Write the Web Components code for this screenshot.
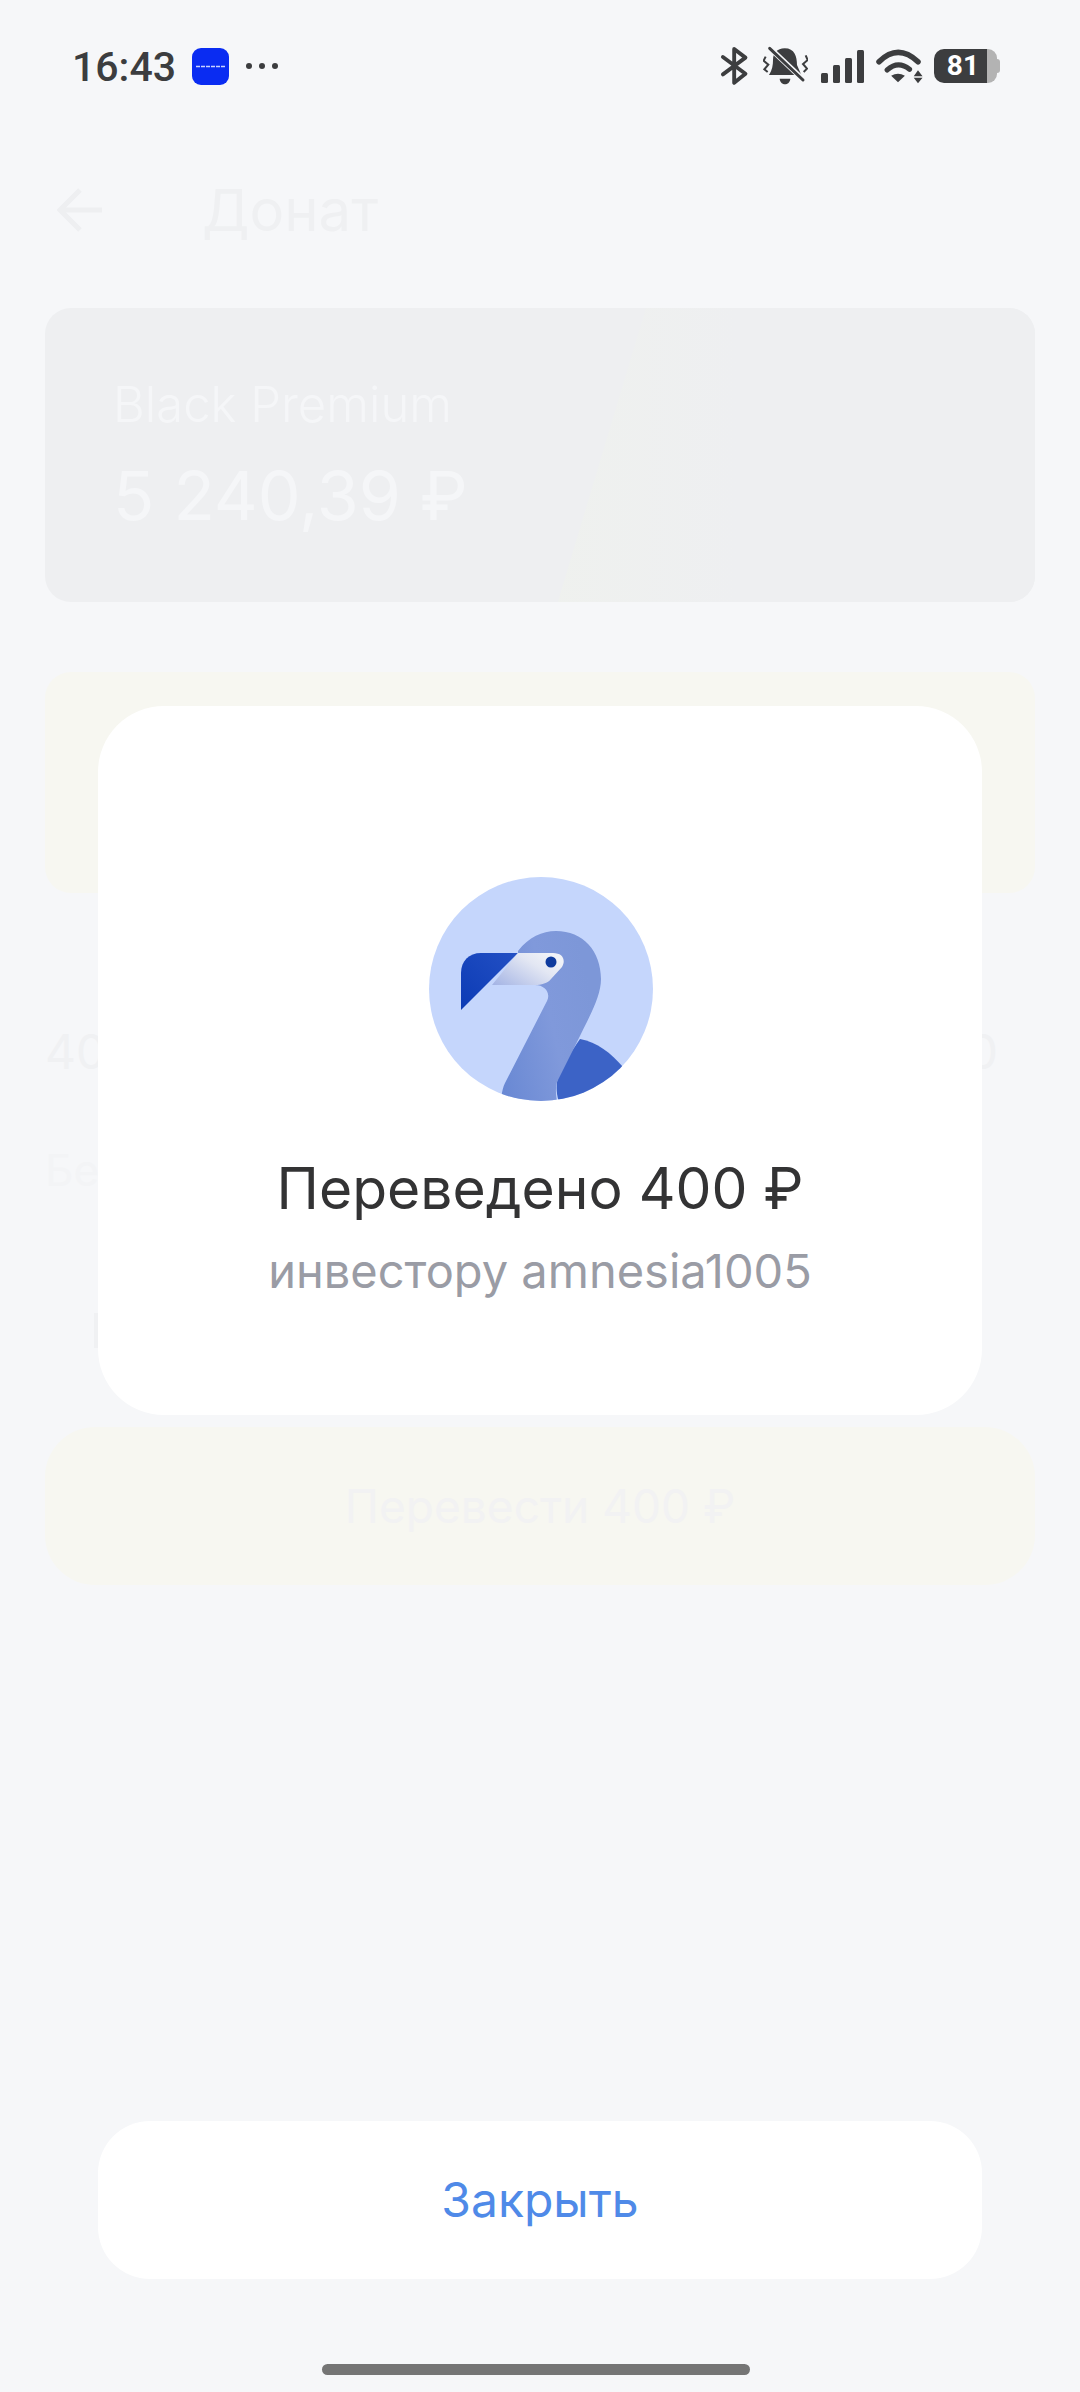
<!DOCTYPE html>
<html lang="ru">
<head>
<meta charset="utf-8">
<title>Донат</title>
<style>
  html, body { margin: 0; padding: 0; }
  body { width: 1080px; height: 2392px; overflow: hidden; background: #f6f7f9; font-family: Inter, "Noto Sans", sans-serif; }
</style>
</head>
<body>
<donate-screen>
  <status-bar time="16:43" battery="81"></status-bar>
  <top-bar>Донат</top-bar>
  <balance-card name="Black Premium" amount="5 240,39 ₽"></balance-card>
  <promo-card></promo-card>
  <amount-row from="400" to="10 000"></amount-row>
  <hint-row>Без</hint-row>
  <pay-button>Перевести 400 ₽</pay-button>
</donate-screen>
<success-overlay>
  <success-dialog title="Переведено 400 ₽" subtitle="инвестору amnesia1005">
    <bird-avatar></bird-avatar>
  </success-dialog>
  <close-button slot="action">Закрыть</close-button>
</success-overlay>

<script>
  class DonateScreen extends HTMLElement {
    connectedCallback() {
      this.attachShadow({ mode: 'open' }).innerHTML = `
        <style>
          :host { display: block; height: 2392px; box-sizing: border-box; }
          .content { display: flex; flex-direction: column; padding: 0 45px; }
        </style>
        <div class="content"><slot></slot></div>
      `;
    }
  }

  class StatusBar extends HTMLElement {
    connectedCallback() {
      const time = this.getAttribute('time');
      const battery = this.getAttribute('battery');
      this.attachShadow({ mode: 'open' }).innerHTML = `
        <style>
          :host { display: flex; align-items: center; height: 132px; margin: 0 -45px; padding: 0 80px 0 72px; box-sizing: border-box; color: #3c3d3f; }
          .time { font: 500 41px/48px Roboto, sans-serif; width: 120px; margin-top: 1px; }
          .app { display: block; width: 37px; height: 37px; margin-right: 17px; }
          .dots { display: block; width: 32px; height: 8px; }
          .right { display: flex; align-items: center; margin-left: auto; }
          svg { display: block; flex: none; }
          .bt { margin-right: 14px; }
          .bell { margin-right: 13px; }
          .signal { margin-right: 11px; }
          .wifi { margin-right: 11px; }
          .battery { display: flex; align-items: center; }
          .cell { width: 53px; height: 34px; background: #3c3d3f; border-radius: 10px 0 0 10px; color: #fff; font: 700 28px/34px Roboto, sans-serif; text-align: right; padding-right: 8px; box-sizing: border-box; }
          .cap { width: 10px; height: 34px; background: #b3b3b3; border-radius: 0 9px 9px 0; }
          .nub { width: 3px; height: 14px; background: #b3b3b3; border-radius: 0 3px 3px 0; }
        </style>
        <span class="time">${time}</span>
        <svg class="app" viewBox="0 0 37 37">
          <rect width="37" height="37" rx="9" fill="#0a2cf2"/>
          <line x1="4" y1="18.5" x2="33" y2="18.5" stroke="#c9d2ff" stroke-width="1.5" stroke-dasharray="4 1"/>
        </svg>
        <svg class="dots" viewBox="0 0 32 8" fill="#3c3d3f">
          <circle cx="3" cy="4" r="3"/><circle cx="16" cy="4" r="3"/><circle cx="29" cy="4" r="3"/>
        </svg>
        <div class="right">
          <svg class="bt" width="29" height="42" viewBox="122 78 90 126" fill="none" stroke="#3c3d3f" stroke-width="12" stroke-linejoin="round" stroke-linecap="round">
            <path d="M131 113 L201 165 L166 193 V88 L201 115 L131 167"/>
          </svg>
          <svg class="bell" width="45" height="40" viewBox="250 78 135 120">
            <path d="M315 85 C345 85 352 110 352 135 L365 165 H268 C278 150 280 135 280 120 C280 100 292 85 315 85Z" fill="#3c3d3f"/>
            <path d="M300 176 H332 C330 198 302 198 300 176Z" fill="#3c3d3f"/>
            <path d="M262 76 L382 190" stroke="#f6f7f9" stroke-width="16"/>
            <path d="M270 85 L370 180" stroke="#3c3d3f" stroke-width="9" stroke-linecap="round"/>
            <path d="M258 110 L252 122 L266 134 L254 148 L264 156" fill="none" stroke="#3c3d3f" stroke-width="6"/>
            <path d="M378 106 L384 120 L370 132 L382 146 L372 156" fill="none" stroke="#3c3d3f" stroke-width="6"/>
          </svg>
          <svg class="signal" width="43" height="33" viewBox="0 0 43 33" fill="#3c3d3f">
            <rect x="0" y="23" width="7" height="10" rx="1.5"/>
            <rect x="12" y="15" width="7" height="18" rx="1.5"/>
            <rect x="24" y="8" width="7" height="25" rx="1.5"/>
            <rect x="36" y="0" width="7" height="33" rx="1.5"/>
          </svg>
          <svg class="wifi" width="48" height="36" viewBox="585 85 146 110">
            <path d="M597 127 Q655 70 716 127" fill="none" stroke="#3c3d3f" stroke-width="17" stroke-linecap="round"/>
            <path d="M622 152 Q655 122 690 150" fill="none" stroke="#3c3d3f" stroke-width="16" stroke-linecap="round"/>
            <path d="M634 170 Q655 158 676 170 L655 190Z" fill="#3c3d3f"/>
            <path d="M716 153 L730 171 H703Z M703 176 H730 L716 193Z" fill="#3c3d3f"/>
          </svg>
          <div class="battery"><div class="cell">${battery}</div><div class="cap"></div><div class="nub"></div></div>
        </div>
      `;
    }
  }

  class TopBar extends HTMLElement {
    connectedCallback() {
      this.attachShadow({ mode: 'open' }).innerHTML = `
        <style>
          :host { display: flex; align-items: center; height: 156px; padding-left: 12px; color: #eff0f2; box-sizing: border-box; }
          svg { display: block; margin-right: 100px; }
          .title { font: 400 58px/70px Inter, sans-serif; }
        </style>
        <svg width="45" height="44" viewBox="0 0 45 44" fill="none" stroke="#eeeff1" stroke-width="5">
          <path d="M45 22 H4 M23 2 L3 22 L23 42"/>
        </svg>
        <div class="title"><slot></slot></div>
      `;
    }
  }

  class BalanceCard extends HTMLElement {
    connectedCallback() {
      this.attachShadow({ mode: 'open' }).innerHTML = `
        <style>
          :host { display: block; position: relative; height: 294px; margin-top: 20px; padding: 68px 0 0 68px; box-sizing: border-box; background: #eeeff1; border-radius: 26px; color: #f5f6f8; overflow: hidden; }
          :host::before { content: ""; position: absolute; inset: 0; background: linear-gradient(90deg, #eff1ee 50%, #eeeff1 70%); clip-path: polygon(60.7% 0, 100% 0, 100% 100%, 51.8% 100%); }
          .name, .amount { position: relative; }
          .name { font: 300 49px/58px Inter, sans-serif; }
          .amount { font: 400 68px/82px Inter, sans-serif; margin-top: 20px; }
        </style>
        <div class="name">${this.getAttribute('name')}</div>
        <div class="amount">${this.getAttribute('amount')}</div>
      `;
    }
  }

  class PromoCard extends HTMLElement {
    connectedCallback() {
      this.attachShadow({ mode: 'open' }).innerHTML = `
        <style>
          :host { display: block; height: 221px; margin-top: 70px; background: #f7f7f1; border-radius: 26px; }
        </style>
      `;
    }
  }

  class AmountRow extends HTMLElement {
    connectedCallback() {
      this.attachShadow({ mode: 'open' }).innerHTML = `
        <style>
          :host { display: flex; justify-content: space-between; margin-top: 129px; margin-right: 37px; font: 400 48px/60px Inter, sans-serif; color: #f0f1f3; }
        </style>
        <span>${this.getAttribute('from')}</span>
        <span>${this.getAttribute('to')}</span>
      `;
    }
  }

  class HintRow extends HTMLElement {
    connectedCallback() {
      this.attachShadow({ mode: 'open' }).innerHTML = `
        <style>
          :host { display: block; margin-top: 58px; height: 287px; font: 400 44px/60px Inter, sans-serif; color: #f3f4f6; }
          .tick { width: 4px; height: 35px; margin: 113px 0 0 49px; background: #f0f1f3; }
        </style>
        <slot></slot>
        <div class="tick"></div>
      `;
    }
  }

  class PayButton extends HTMLElement {
    connectedCallback() {
      this.attachShadow({ mode: 'open' }).innerHTML = `
        <style>
          :host { display: flex; align-items: center; justify-content: center; height: 158px; background: #f7f7f1; border-radius: 50px; font: 400 46px/60px Inter, sans-serif; color: #f2f2f3; }
        </style>
        <slot></slot>
      `;
    }
  }

  class SuccessOverlay extends HTMLElement {
    connectedCallback() {
      this.attachShadow({ mode: 'open' }).innerHTML = `
        <style>
          /* sits over the faded screen */
          :host { position: absolute; inset: 0; display: flex; flex-direction: column; align-items: center; padding-top: 706px; box-sizing: border-box; }
          .home { width: 428px; height: 11px; margin: 85px 8px 17px 0; background: #757575; border-radius: 6px; flex: none; }
          ::slotted(close-button) { margin-top: auto; }
        </style>
        <slot></slot>
        <slot name="action"></slot>
        <div class="home"></div>
      `;
    }
  }

  class SuccessDialog extends HTMLElement {
    connectedCallback() {
      this.attachShadow({ mode: 'open' }).innerHTML = `
        <style>
          :host { display: flex; flex-direction: column; align-items: center; width: 884px; height: 709px; padding-top: 171px; box-sizing: border-box; background: #fff; border-radius: 66px; }
          .title { margin-top: 53px; font: 400 57px/70px Inter, sans-serif; color: #333334; white-space: nowrap; }
          .sub { margin-top: 17px; font: 400 47px/60px Inter, sans-serif; color: #9a9ca5; white-space: nowrap; }
        </style>
        <slot></slot>
        <div class="title">${this.getAttribute('title')}</div>
        <div class="sub">${this.getAttribute('subtitle')}</div>
      `;
    }
  }

  class BirdAvatar extends HTMLElement {
    connectedCallback() {
      this.attachShadow({ mode: 'open' }).innerHTML = `
        <style>
          :host { display: block; width: 224px; height: 224px; margin-left: 2px; }
          svg { display: block; }
        </style>
        <svg width="224" height="224" viewBox="0 0 224 224">
          <defs>
            <clipPath id="disc"><circle cx="112" cy="112" r="112"/></clipPath>
            <linearGradient id="neck" x1="0" y1="1" x2="1" y2="0.6">
              <stop offset="0" stop-color="#6787d3"/><stop offset="0.6" stop-color="#8099db"/><stop offset="1" stop-color="#7d97d8"/>
            </linearGradient>
            <linearGradient id="beak" x1="0" y1="1" x2="1" y2="0">
              <stop offset="0" stop-color="#0c3bb5"/><stop offset="1" stop-color="#2350c4"/>
            </linearGradient>
            <linearGradient id="face" x1="0" y1="1" x2="1" y2="0.3">
              <stop offset="0" stop-color="#a3b3e4"/><stop offset="0.7" stop-color="#e3e7f3"/><stop offset="1" stop-color="#f1f3f8"/>
            </linearGradient>
          </defs>
          <g clip-path="url(#disc)">
            <rect width="224" height="224" fill="#c5d6fc"/>
            <path d="M151 162 C168 165 182 176 194 190 L160 230 H132 C124 212 128 198 136 184Z" fill="#3c63c6"/>
            <path d="M89 74 C100 60 113 54 127 54 C154 54 172 74 172 102 C172 120 160 140 148 165 L128 205 C126 212 127 220 129 230 H72 C72 220 73 212 76 206 L118 124 C122 116 116 108 106 108 L90 100Z" fill="url(#neck)"/>
            <path d="M89 76 H52 C40 76 32 84 32 96 V133Z" fill="url(#beak)"/>
            <path d="M89 76 H124 C134 76 137 83 133 90 L122 102 C119 106 112 108 106 108 H63Z" fill="url(#face)"/>
            <circle cx="122" cy="85" r="5.5" fill="#0f3b9e"/>
          </g>
        </svg>
      `;
    }
  }

  class CloseButton extends HTMLElement {
    connectedCallback() {
      this.attachShadow({ mode: 'open' }).innerHTML = `
        <style>
          :host { display: flex; align-items: center; justify-content: center; flex: none; width: 884px; height: 158px; background: #fff; border-radius: 52px; font: 400 48px/60px Inter, sans-serif; color: #4f8ae8; }
        </style>
        <slot></slot>
      `;
    }
  }

  customElements.define('donate-screen', DonateScreen);
  customElements.define('status-bar', StatusBar);
  customElements.define('top-bar', TopBar);
  customElements.define('balance-card', BalanceCard);
  customElements.define('promo-card', PromoCard);
  customElements.define('amount-row', AmountRow);
  customElements.define('hint-row', HintRow);
  customElements.define('pay-button', PayButton);
  customElements.define('success-overlay', SuccessOverlay);
  customElements.define('success-dialog', SuccessDialog);
  customElements.define('bird-avatar', BirdAvatar);
  customElements.define('close-button', CloseButton);
</script>
</body>
</html>
